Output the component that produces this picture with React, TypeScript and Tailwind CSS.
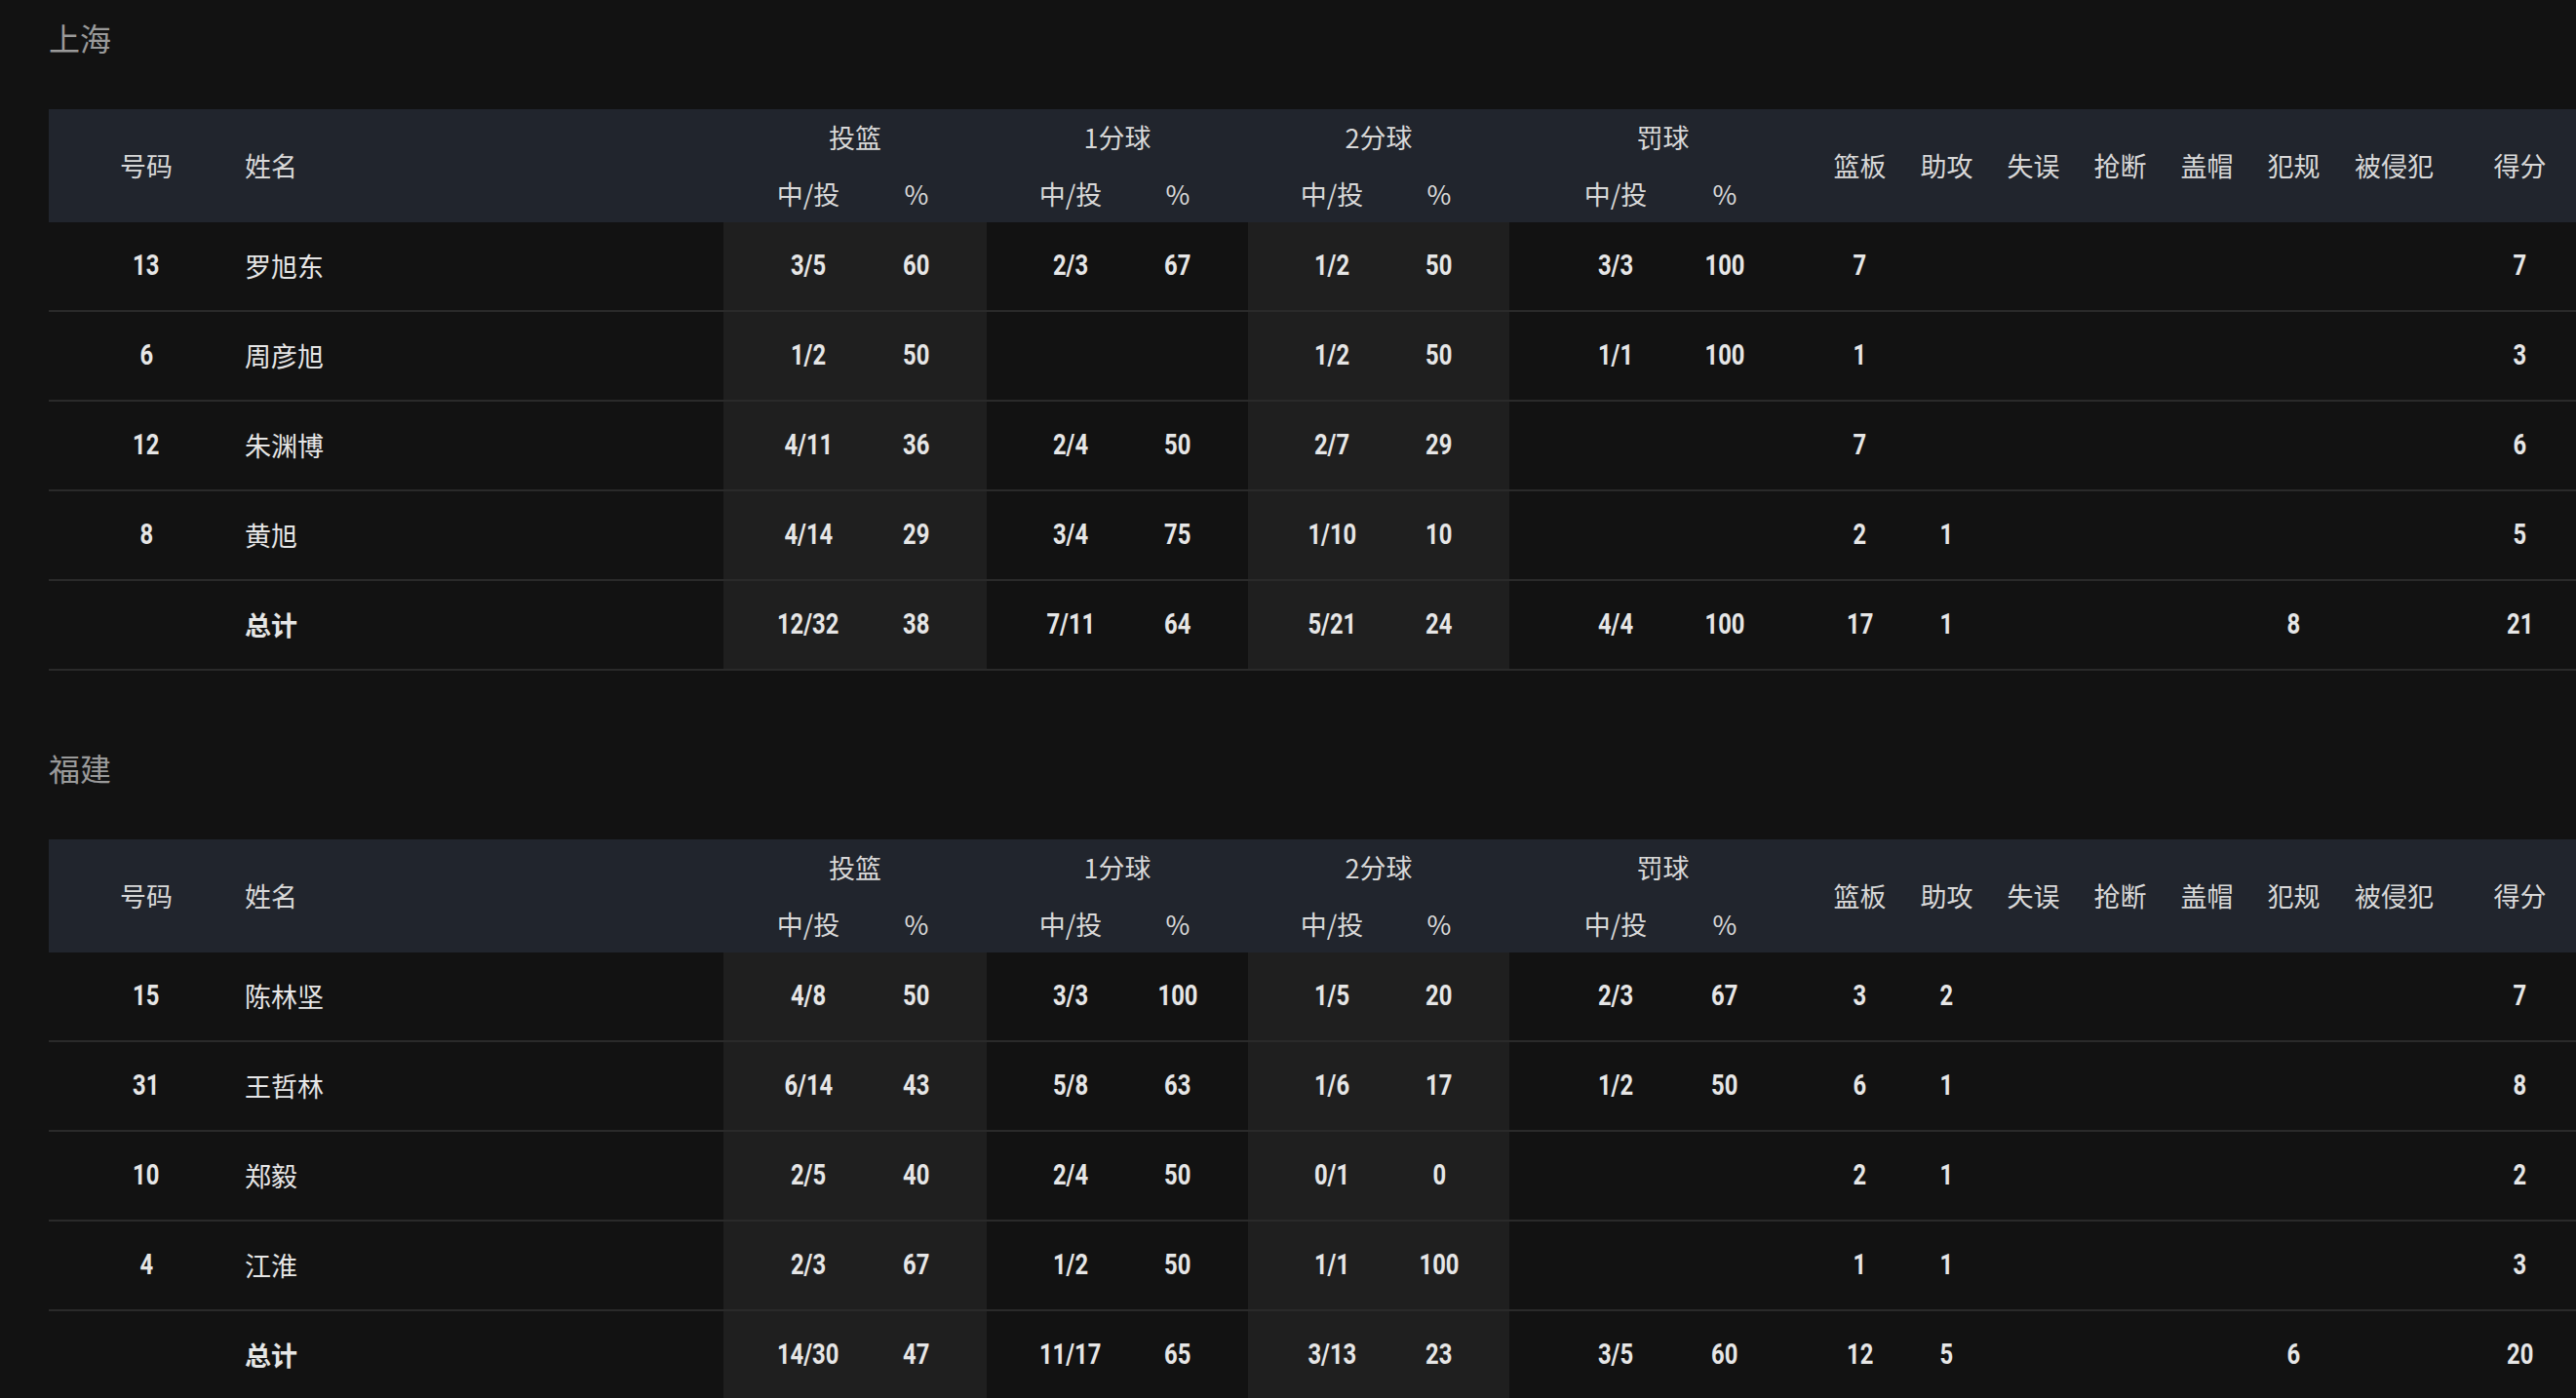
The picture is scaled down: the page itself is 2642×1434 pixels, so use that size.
type Cell = string;

interface Player {
  no: string;
  name: string;
  stats: Cell[]; // 8 paired values then 8 singles
  total?: boolean;
}

const groups = [
  { label: "投篮", w: "w-[270px]", c1: "w-[174px]", c2: "w-[96px] pr-[48px]", shade: true },
  { label: "1分球", w: "w-[268px]", c1: "w-[172px]", c2: "w-[96px] pr-[48px]", shade: false },
  { label: "2分球", w: "w-[268px]", c1: "w-[172px]", c2: "w-[96px] pr-[48px]", shade: true },
  { label: "罚球", w: "w-[315px]", c1: "w-[196px] pl-[22px]", c2: "w-[119px] pr-[69px]", shade: false },
];

const singles = [
  { label: "篮板", w: "w-[89px]" },
  { label: "助攻", w: "w-[89px]" },
  { label: "失误", w: "w-[89px]" },
  { label: "抢断", w: "w-[89px]" },
  { label: "盖帽", w: "w-[89px]" },
  { label: "犯规", w: "w-[89px]" },
  { label: "被侵犯", w: "w-[117px]" },
  { label: "得分", w: "w-[141px]" },
];

const teams: { name: string; players: Player[] }[] = [
  {
    name: "上海",
    players: [
      { no: "13", name: "罗旭东", stats: ["3/5", "60", "2/3", "67", "1/2", "50", "3/3", "100", "7", "", "", "", "", "", "", "7"] },
      { no: "6", name: "周彦旭", stats: ["1/2", "50", "", "", "1/2", "50", "1/1", "100", "1", "", "", "", "", "", "", "3"] },
      { no: "12", name: "朱渊博", stats: ["4/11", "36", "2/4", "50", "2/7", "29", "", "", "7", "", "", "", "", "", "", "6"] },
      { no: "8", name: "黄旭", stats: ["4/14", "29", "3/4", "75", "1/10", "10", "", "", "2", "1", "", "", "", "", "", "5"] },
      { no: "", name: "总计", total: true, stats: ["12/32", "38", "7/11", "64", "5/21", "24", "4/4", "100", "17", "1", "", "", "", "8", "", "21"] },
    ],
  },
  {
    name: "福建",
    players: [
      { no: "15", name: "陈林坚", stats: ["4/8", "50", "3/3", "100", "1/5", "20", "2/3", "67", "3", "2", "", "", "", "", "", "7"] },
      { no: "31", name: "王哲林", stats: ["6/14", "43", "5/8", "63", "1/6", "17", "1/2", "50", "6", "1", "", "", "", "", "", "8"] },
      { no: "10", name: "郑毅", stats: ["2/5", "40", "2/4", "50", "0/1", "0", "", "", "2", "1", "", "", "", "", "", "2"] },
      { no: "4", name: "江淮", stats: ["2/3", "67", "1/2", "50", "1/1", "100", "", "", "1", "1", "", "", "", "", "", "3"] },
      { no: "", name: "总计", total: true, stats: ["14/30", "47", "11/17", "65", "3/13", "23", "3/5", "60", "12", "5", "", "", "", "6", "", "20"] },
    ],
  },
];

// condensed-looking numerals
function Num({ v }: { v: string }) {
  if (!v) return null;
  return (
    <span className="inline-block scale-x-[0.82] font-['Roboto',sans-serif] text-[29px] font-bold">{v}</span>
  );
}

function HeaderRow() {
  return (
    <div className="flex h-[116px] bg-[#21252d] text-[27px] text-[#d8d8d8]">
      <div className="flex w-[200px] shrink-0 items-center justify-center">号码</div>
      <div className="flex w-[492px] shrink-0 items-center pl-px">姓名</div>
      {groups.map((g) => (
        <div key={g.label} className={`${g.w} flex shrink-0 flex-col`}>
          <div className="flex h-[58px] items-center justify-center">{g.label}</div>
          <div className="flex h-[58px]">
            <div className={`${g.c1} flex shrink-0 items-center justify-center`}>中/投</div>
            <div className={`${g.c2} flex shrink-0 items-center justify-center`}>%</div>
          </div>
        </div>
      ))}
      {singles.map((s) => (
        <div key={s.label} className={`${s.w} flex shrink-0 items-center justify-center`}>
          {s.label}
        </div>
      ))}
    </div>
  );
}

function PlayerRow({ p }: { p: Player }) {
  return (
    <div className="flex h-[92px] border-b-2 border-[#2a2a2a] text-[27px] text-[#e6e6e6]">
      <div className="flex w-[200px] shrink-0 items-center justify-center">
        <Num v={p.no} />
      </div>
      <div className={`flex w-[492px] shrink-0 items-center pl-px ${p.total ? "font-bold" : "font-normal"}`}>
        {p.name}
      </div>
      {groups.map((g, i) => (
        <div key={g.label} className={`${g.w} flex shrink-0 ${g.shade ? "bg-[#1f1f1f]" : ""}`}>
          <div className={`${g.c1} flex shrink-0 items-center justify-center`}>
            <Num v={p.stats[i * 2]} />
          </div>
          <div className={`${g.c2} flex shrink-0 items-center justify-center`}>
            <Num v={p.stats[i * 2 + 1]} />
          </div>
        </div>
      ))}
      {singles.map((s, i) => (
        <div key={s.label} className={`${s.w} flex shrink-0 items-center justify-center`}>
          <Num v={p.stats[8 + i]} />
        </div>
      ))}
    </div>
  );
}

export default function App() {
  return (
    <div className="min-h-screen w-full overflow-hidden bg-[#121212] pt-[16px] pl-[50px] font-['Noto_Sans_CJK_SC',sans-serif]">
      {teams.map((t, idx) => (
        <section key={t.name} className={idx > 0 ? "mt-[77px]" : ""}>
          {/* Team name */}
          <h2 className="mb-[52px] h-[44px] text-[32px] leading-[44px] text-[#9a9a9a]">{t.name}</h2>

          {/* Box score */}
          <div className="w-max">
            <HeaderRow />
            {t.players.map((p) => (
              <PlayerRow key={p.name} p={p} />
            ))}
          </div>
        </section>
      ))}
    </div>
  );
}
